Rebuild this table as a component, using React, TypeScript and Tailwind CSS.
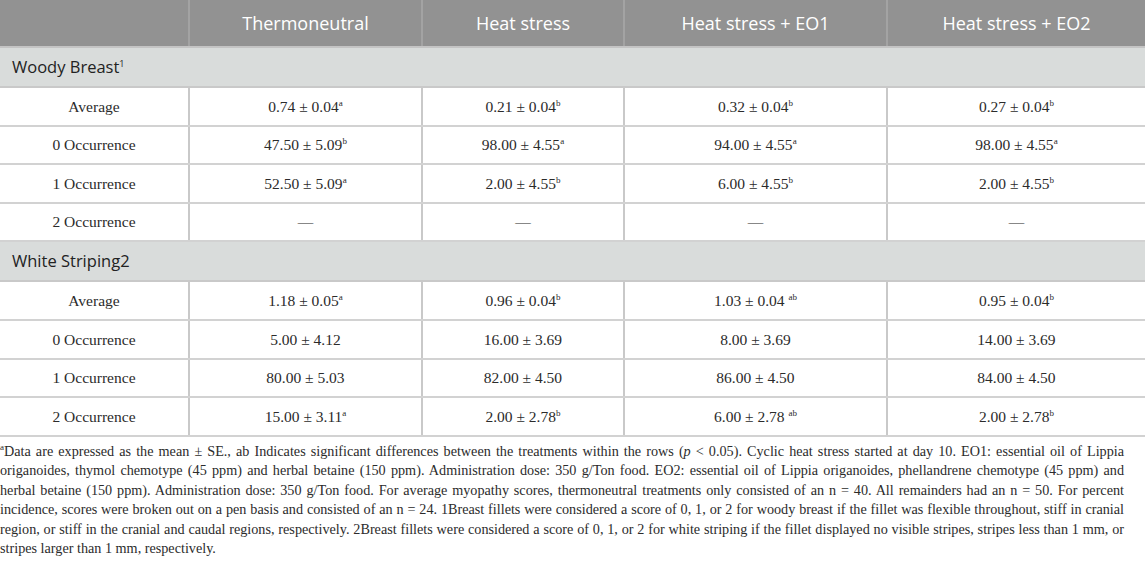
import React from 'react';

type Cell = { v: string; s?: string };

interface Row {
  label: string;
  cells: Cell[];
}

const woody: Row[] = [
  { label: 'Average', cells: [{ v: '0.74 ± 0.04', s: 'a' }, { v: '0.21 ± 0.04', s: 'b' }, { v: '0.32 ± 0.04', s: 'b' }, { v: '0.27 ± 0.04', s: 'b' }] },
  { label: '0 Occurrence', cells: [{ v: '47.50 ± 5.09', s: 'b' }, { v: '98.00 ± 4.55', s: 'a' }, { v: '94.00 ± 4.55', s: 'a' }, { v: '98.00 ± 4.55', s: 'a' }] },
  { label: '1 Occurrence', cells: [{ v: '52.50 ± 5.09', s: 'a' }, { v: '2.00 ± 4.55', s: 'b' }, { v: '6.00 ± 4.55', s: 'b' }, { v: '2.00 ± 4.55', s: 'b' }] },
  { label: '2 Occurrence', cells: [{ v: '—' }, { v: '—' }, { v: '—' }, { v: '—' }] },
];

const striping: Row[] = [
  { label: 'Average', cells: [{ v: '1.18 ± 0.05', s: 'a' }, { v: '0.96 ± 0.04', s: 'b' }, { v: '1.03 ± 0.04 ', s: 'ab' }, { v: '0.95 ± 0.04', s: 'b' }] },
  { label: '0 Occurrence', cells: [{ v: '5.00 ± 4.12' }, { v: '16.00 ± 3.69' }, { v: '8.00 ± 3.69' }, { v: '14.00 ± 3.69' }] },
  { label: '1 Occurrence', cells: [{ v: '80.00 ± 5.03' }, { v: '82.00 ± 4.50' }, { v: '86.00 ± 4.50' }, { v: '84.00 ± 4.50' }] },
  { label: '2 Occurrence', cells: [{ v: '15.00 ± 3.11', s: 'a' }, { v: '2.00 ± 2.78', s: 'b' }, { v: '6.00 ± 2.78 ', s: 'ab' }, { v: '2.00 ± 2.78', s: 'b' }] },
];

const headers = ['Thermoneutral', 'Heat stress', 'Heat stress + EO1', 'Heat stress + EO2'];

const grid = 'grid grid-cols-[190px_233px_202px_263px_257px]';

// superscript letters sit high, like in the journal layout
const Sup = ({ children }: { children: React.ReactNode }) => (
  <sup className="text-[9px] align-baseline relative top-[-6px]">{children}</sup>
);

const SectionRow = ({ children }: { children: React.ReactNode }) => (
  <div className="h-[40px] flex items-center pl-[12px] bg-[#d9dcdb] border-b-2 border-[#c9c9c9] text-[16.5px] text-[#222] font-['Open_Sans',sans-serif]">
    {children}
  </div>
);

const DataRows = ({ rows }: { rows: Row[] }) => (
  <>
    {rows.map((r, i) => (
      <div key={i} className={`${grid} h-[38.6px] border-b-2 border-[#d2d2d2] text-[15.5px] text-[#2b2b2b] font-['Liberation_Serif',serif]`}>
        <div className="flex items-center justify-center border-r-2 border-[#c9c9c9]">{r.label}</div>
        {r.cells.map((c, j) => (
          <div key={j} className={`flex items-center justify-center whitespace-pre ${j < 3 ? 'border-r-2 border-[#c9c9c9]' : ''}`}>
            <span>
              {c.v}
              {c.s && <Sup>{c.s}</Sup>}
            </span>
          </div>
        ))}
      </div>
    ))}
  </>
);

const Line = ({ children, last }: { children: React.ReactNode; last?: boolean }) => (
  <div className={last ? '' : 'text-justify [text-align-last:justify]'}>{children}</div>
);

const App: React.FC = () => {
  return (
    <div className="w-[1145px] h-[567px] bg-white overflow-hidden">
      <div className={`${grid} h-[48px] bg-[#929292] text-white text-[18px] font-['Open_Sans',sans-serif] border-b-2 border-[#c4c4c4]`}>
        <div className="border-r-2 border-[#a3a3a3]" />
        {headers.map((h, i) => (
          <div key={h} className={`flex items-center justify-center ${i < 3 ? 'border-r-2 border-[#a3a3a3]' : ''}`}>
            {h}
          </div>
        ))}
      </div>

      <SectionRow>
        <span>
          Woody Breast<Sup>1</Sup>
        </span>
      </SectionRow>
      <DataRows rows={woody} />

      <SectionRow>White Striping2</SectionRow>
      <DataRows rows={striping} />

      <div className="mt-[5px] pr-[21px] text-[14.2px] leading-[19.5px] text-[#2b2b2b] whitespace-nowrap font-['Liberation_Serif',serif]">
        <Line>
          <Sup>a</Sup>Data are expressed as the mean ± SE., ab Indicates significant differences between the treatments within the rows (<i>p</i> &lt; 0.05). Cyclic heat stress started at day 10. EO1: essential oil of Lippia
        </Line>
        <Line>
          origanoides, thymol chemotype (45 ppm) and herbal betaine (150 ppm). Administration dose: 350 g/Ton food. EO2: essential oil of Lippia origanoides, phellandrene chemotype (45 ppm) and
        </Line>
        <Line>
          herbal betaine (150 ppm). Administration dose: 350 g/Ton food. For average myopathy scores, thermoneutral treatments only consisted of an n = 40. All remainders had an n = 50. For percent
        </Line>
        <Line>
          incidence, scores were broken out on a pen basis and consisted of an n = 24. 1Breast fillets were considered a score of 0, 1, or 2 for woody breast if the fillet was flexible throughout, stiff in cranial
        </Line>
        <Line>
          region, or stiff in the cranial and caudal regions, respectively. 2Breast fillets were considered a score of 0, 1, or 2 for white striping if the fillet displayed no visible stripes, stripes less than 1 mm, or
        </Line>
        <Line last>stripes larger than 1 mm, respectively.</Line>
      </div>
    </div>
  );
};

export default App;
